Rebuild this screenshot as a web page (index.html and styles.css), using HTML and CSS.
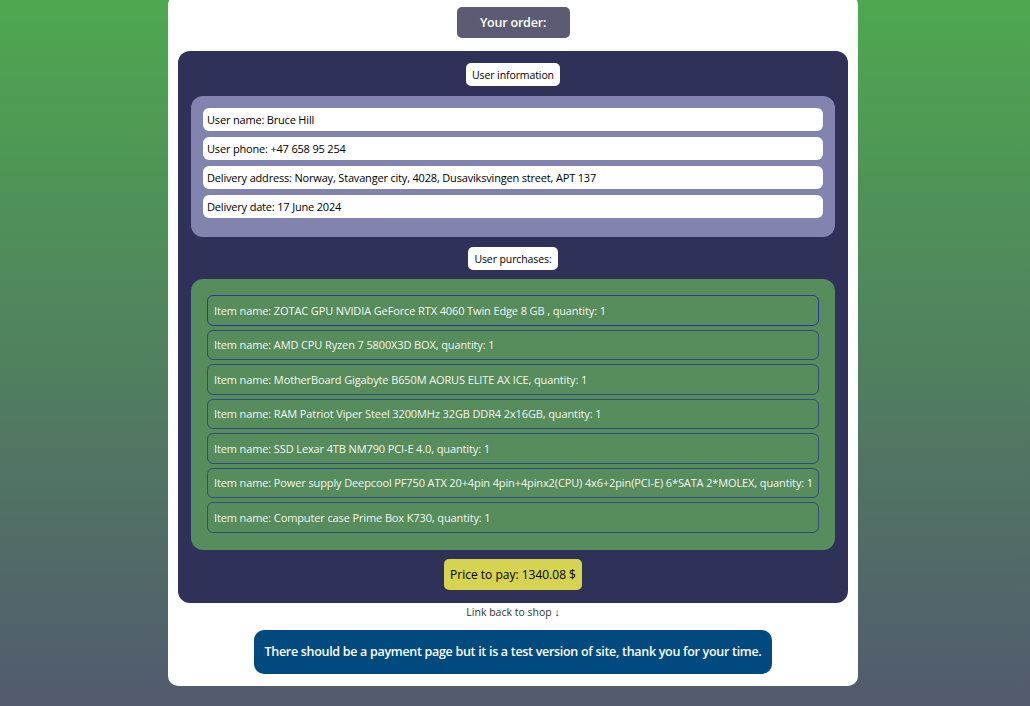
FILE: index.html
```html
<!DOCTYPE html>
<html lang="en">
<head>
<meta charset="utf-8">
<title>Your order</title>
<link rel="stylesheet" href="styles.css">
</head>
<body>
<main class="card">
  <div class="title">Your order:</div>
  <section class="order">
    <div class="label">User information</div>
    <div class="info">
      <div class="info-row">User name: Bruce Hill</div>
      <div class="info-row">User phone: +47 658 95 254</div>
      <div class="info-row">Delivery address: Norway, Stavanger city, 4028, Dusaviksvingen street, APT 137</div>
      <div class="info-row">Delivery date: 17 June 2024</div>
    </div>
    <div class="label">User purchases:</div>
    <div class="purchases">
      <div class="item item-active">Item name: ZOTAC GPU NVIDIA GeForce RTX 4060 Twin Edge 8 GB , quantity: 1</div>
      <div class="item">Item name: AMD CPU Ryzen 7 5800X3D BOX, quantity: 1</div>
      <div class="item">Item name: MotherBoard Gigabyte B650M AORUS ELITE AX ICE, quantity: 1</div>
      <div class="item">Item name: RAM Patriot Viper Steel 3200MHz 32GB DDR4 2x16GB, quantity: 1</div>
      <div class="item">Item name: SSD Lexar 4TB NM790 PCI-E 4.0, quantity: 1</div>
      <div class="item">Item name: Power supply Deepcool PF750 ATX 20+4pin 4pin+4pinx2(CPU) 4x6+2pin(PCI-E) 6*SATA 2*MOLEX, quantity: 1</div>
      <div class="item">Item name: Computer case Prime Box K730, quantity: 1</div>
    </div>
    <div class="price">Price to pay: 1340.08 $</div>
  </section>
  <a class="back" href="#">Link back to shop ↓</a>
  <div class="notice">There should be a payment page but it is a test version of site, thank you for your time.</div>
</main>
</body>
</html>
```

FILE: styles.css
```css
html, body {
  margin: 0;
  padding: 0;
}
body {
  height: 706px;
  overflow: hidden;
  background: linear-gradient(to bottom, #4ea84f 0%, #525a6e 100%);
  font-family: "Open Sans", "Noto Sans", sans-serif;
  color: #000;
}
.card {
  width: 690px;
  margin: -5px 0 0 168px;
  background: #fff;
  border-radius: 10px;
  padding: 12px 0 12px;
  display: flex;
  flex-direction: column;
  align-items: center;
  box-sizing: border-box;
}
.title {
  width: 113px;
  height: 31px;
  background: #5b5c73;
  color: #fff;
  font-weight: 600;
  font-size: 12.5px;
  letter-spacing: -0.2px;
  border-radius: 5px;
  display: flex;
  align-items: center;
  justify-content: center;
}
.order {
  margin-top: 13px;
  width: 670px;
  box-sizing: border-box;
  background: #303159;
  border-radius: 12px;
  padding: 12px 13px 13px;
  display: flex;
  flex-direction: column;
  align-items: center;
}
.label {
  height: 23px;
  padding: 0 6px;
  background: #fff;
  border-radius: 5px;
  font-size: 10.5px;
  letter-spacing: -0.1px;
  display: flex;
  align-items: center;
}
.info {
  margin-top: 10px;
  margin-bottom: 10px;
  width: 644px;
  box-sizing: border-box;
  background: #8383b0;
  border-radius: 12px;
  padding: 12px 12px 19px;
  display: flex;
  flex-direction: column;
  gap: 6px;
}
.info-row {
  height: 23px;
  background: #fff;
  border-radius: 6px;
  padding-left: 4px;
  font-size: 11px;
  letter-spacing: -0.18px;
  display: flex;
  align-items: center;
}
.purchases {
  margin-top: 9px;
  width: 644px;
  box-sizing: border-box;
  background: #578c5c;
  border-radius: 12px;
  padding: 16px 16px 17px;
  display: flex;
  flex-direction: column;
  gap: 4px;
}
.item {
  height: 30.5px;
  box-sizing: border-box;
  border: 1px solid #34497c;
  border-radius: 6px;
  padding-left: 6px;
  color: #f6f6f2;
  font-size: 11px;
  letter-spacing: -0.12px;
  display: flex;
  align-items: center;
  white-space: nowrap;
}
.item-active {
  border-color: #2f3a96;
}
.price {
  margin-top: 9px;
  width: 138px;
  height: 31px;
  background: #d5d34f;
  border-radius: 5px;
  font-size: 12px;
  display: flex;
  align-items: center;
  justify-content: center;
}
.back {
  margin-top: 1px;
  font-size: 10.5px;
  color: #333;
  text-decoration: none;
  line-height: 16px;
}
.notice {
  margin-top: 10px;
  width: 518px;
  height: 44px;
  background: #004a80;
  color: #fff;
  font-weight: 600;
  font-size: 12.5px;
  letter-spacing: -0.3px;
  white-space: nowrap;
  border-radius: 10px;
  display: flex;
  align-items: center;
  justify-content: center;
}
```
